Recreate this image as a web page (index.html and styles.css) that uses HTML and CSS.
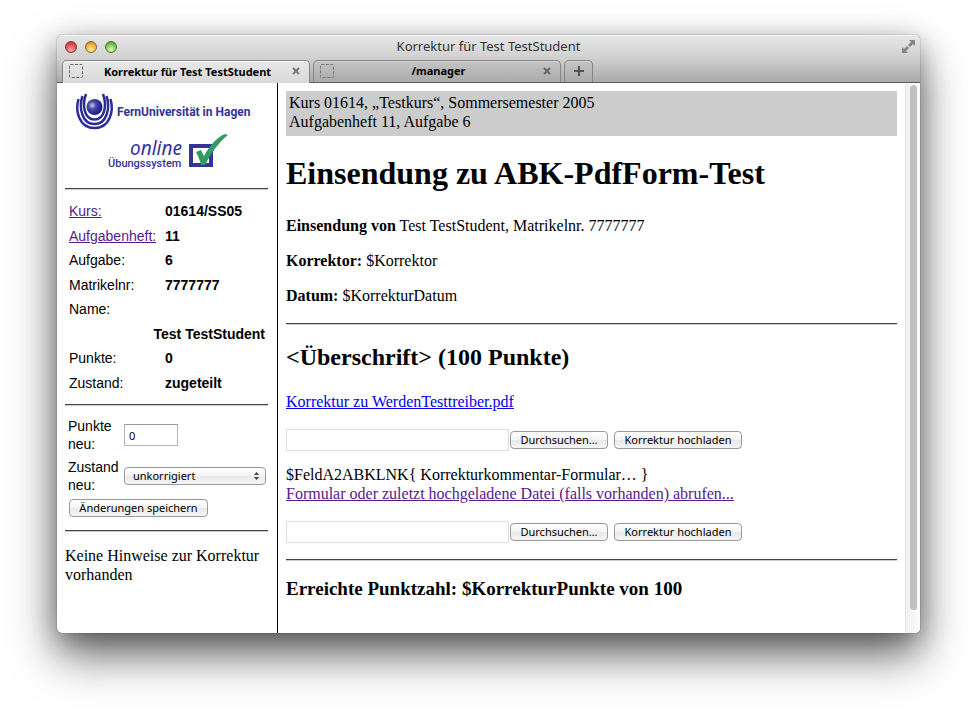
FILE: index.html
```html
<!DOCTYPE html>
<html lang="de">
<head>
<meta charset="utf-8">
<title>Korrektur für Test TestStudent</title>
<link rel="stylesheet" href="styles.css">
</head>
<body>
<div class="window">
  <header class="chrome">
    <div class="titlebar">
      <div class="lights">
        <button class="light red" aria-label="Schließen"></button>
        <button class="light yellow" aria-label="Minimieren"></button>
        <button class="light green" aria-label="Zoomen"></button>
      </div>
      <div class="title">Korrektur für Test TestStudent</div>
      <button class="fullscreen" aria-label="Vollbild">
        <svg width="15" height="15" viewBox="0 0 15 15"><path d="M8 1h6v6l-2-2-3 3-2-2 3-3zM1 8l2 2 3-3 2 2-3 3 2 2H1z" fill="#858585"/></svg>
      </button>
    </div>
    <nav class="tabs">
      <div class="tab active">
        <svg class="favicon" width="14" height="14" viewBox="0 0 14 14"><rect x=".5" y=".5" width="13" height="13" rx="1" fill="none" stroke="#666" stroke-dasharray="3 1.5"/></svg>
        <button class="tab-label">Korrektur für Test TestStudent</button>
        <button class="close" aria-label="Tab schließen"><svg width="8" height="8" viewBox="0 0 8 8"><path d="M1 1l6 6M7 1L1 7" stroke="#777" stroke-width="2"/></svg></button>
      </div>
      <div class="tab">
        <svg class="favicon" width="14" height="14" viewBox="0 0 14 14"><rect x=".5" y=".5" width="13" height="13" rx="1" fill="none" stroke="#777" stroke-dasharray="3 1.5"/></svg>
        <button class="tab-label">/manager</button>
        <button class="close" aria-label="Tab schließen"><svg width="8" height="8" viewBox="0 0 8 8"><path d="M1 1l6 6M7 1L1 7" stroke="#666" stroke-width="2"/></svg></button>
      </div>
      <button class="tab new" aria-label="Neuer Tab"><svg width="10" height="10" viewBox="0 0 10 10"><path d="M5 0v10M0 5h10" stroke="#555" stroke-width="2"/></svg></button>
    </nav>
  </header>
  <div class="page">
    <aside class="sidebar">
      <svg class="logo" width="203" height="88" viewBox="0 0 203 88" role="img" aria-label="FernUniversität in Hagen, online Übungssystem">
        <defs><radialGradient id="ball" cx=".36" cy=".4" r=".6"><stop offset="0" stop-color="#c9cbe8"/><stop offset=".4" stop-color="#4a4ba5"/><stop offset="1" stop-color="#1c1d85"/></radialGradient></defs>
        <g fill="none" stroke="#2c2d94" stroke-width="2.500">
          <path d="M13.500 8C10 20 14 37 29.500 37S49 20 45.500 8"/>
          <path d="M17.500 5C13.500 17 17 33 29.500 33S45.500 17 41.500 5"/>
          <path d="M21 3C17 14 19 28.500 29.500 28.500S42 14 38 3"/>
        </g>
        <circle cx="29.500" cy="16" r="8" fill="url(#ball)"/>
        <text class="uni" x="52" y="25">FernUniversität in Hagen</text>
        <text class="online" x="65" y="64">online</text>
        <text class="system" x="43" y="76">Übungssystem</text>
        <rect x="126" y="55" width="20" height="19" fill="#fff" stroke="#333399" stroke-width="4"/>
        <path d="M131 61l5-2 3 6c6-11 13-19 21-22l3 1c-9 7-16 17-23 30h-4c-1-5-3-9-5-13z" fill="#339966"/>
      </svg>
      <hr>
      <table class="info">
        <tr><th><a href="#">Kurs:</a></th><td>01614/SS05</td></tr>
        <tr><th><a href="#">Aufgabenheft:</a></th><td>11</td></tr>
        <tr><th>Aufgabe:</th><td>6</td></tr>
        <tr><th>Matrikelnr:</th><td>7777777</td></tr>
        <tr><th>Name:</th><td></td></tr>
        <tr><td colspan="2" class="name">Test TestStudent</td></tr>
        <tr><th>Punkte:</th><td>0</td></tr>
        <tr><th>Zustand:</th><td>zugeteilt</td></tr>
      </table>
      <hr>
      <form class="grading">
        <label for="punkte">Punkte neu:</label>
        <input id="punkte" class="points" type="text" value="0">
        <label for="zustand">Zustand neu:</label>
        <div class="select-wrap">
          <select id="zustand"><option>unkorrigiert</option></select>
          <svg class="arrows" width="5" height="8" viewBox="0 0 5 8"><path d="M2.500 0L5 3H0zM2.500 8L0 5h5z" fill="#444"/></svg>
        </div>
        <button type="button" class="btn save">Änderungen speichern</button>
      </form>
      <hr>
      <p class="hint">Keine Hinweise zur Korrektur vorhanden</p>
    </aside>
    <main class="content">
      <div class="course">Kurs 01614, „Testkurs“, Sommersemester 2005<br>Aufgabenheft 11, Aufgabe 6</div>
      <h1>Einsendung zu ABK-PdfForm-Test</h1>
      <p><b>Einsendung von</b> Test TestStudent, Matrikelnr. 7777777</p>
      <p><b>Korrektor:</b> $Korrektor</p>
      <p><b>Datum:</b> $KorrekturDatum</p>
      <hr>
      <h2>&lt;Überschrift&gt; (100 Punkte)</h2>
      <p><a class="fresh" href="#">Korrektur zu WerdenTesttreiber.pdf</a></p>
      <form class="upload">
        <input type="text" aria-label="Datei">
        <button type="button" class="btn">Durchsuchen…</button>
        <button type="button" class="btn send">Korrektur hochladen</button>
      </form>
      <p>$FeldA2ABKLNK{ Korrekturkommentar-Formular… }<br><a href="#">Formular oder zuletzt hochgeladene Datei (falls vorhanden) abrufen...</a></p>
      <form class="upload">
        <input type="text" aria-label="Datei">
        <button type="button" class="btn">Durchsuchen…</button>
        <button type="button" class="btn send">Korrektur hochladen</button>
      </form>
      <hr>
      <h3>Erreichte Punktzahl: $KorrekturPunkte von 100</h3>
    </main>
    <div class="scrollbar"><div class="thumb"></div></div>
  </div>
</div>
</body>
</html>
```
FILE: styles.css
```css
* { box-sizing: border-box; }

body {
  margin: 0;
  min-height: 100vh;
  padding: 35px 57px 79px;
  display: flex;
  background: #fff;
  color: #000;
  font: 16px/19px "Liberation Serif", serif;
}

button { margin: 0; padding: 0; border: 0; background: none; font: inherit; color: inherit; }

.window {
  flex: 1;
  display: flex;
  flex-direction: column;
  overflow: hidden;
  border-radius: 5px;
  background: #fff;
  box-shadow: 0 0 1px rgba(0, 0, 0, .8), 0 22px 46px rgba(0, 0, 0, .6), 0 6px 24px rgba(0, 0, 0, .25);
}

/* Browser chrome */
.chrome {
  background: linear-gradient(#e6e6e6, #cfcfcf 50%, #a9a9a9);
  border-top: 1px solid #f4f4f4;
  border-bottom: 1px solid #5e5e5e;
  font-family: "Noto Sans", sans-serif;
}

.titlebar {
  display: grid;
  grid-template-columns: 80px 1fr 80px;
  align-items: center;
  height: 24px;
  padding-bottom: 3px;
}

.lights { display: flex; gap: 8px; padding-left: 8px; }

.light { width: 12px; height: 12px; border-radius: 50%; border: 1px solid #555; }
.red { background: radial-gradient(circle at 50% 80%, #ffb0a8, #e8474c 60%, #a8262c); border-color: #8c2f33; }
.yellow { background: radial-gradient(circle at 50% 80%, #fff0a0, #f0ad3c 60%, #b77920); border-color: #8f6428; }
.green { background: radial-gradient(circle at 50% 80%, #d8ffb0, #7cc454 60%, #478b2c); border-color: #47733a; }

.title { text-align: center; font-size: 13px; color: #333; }

.fullscreen { justify-self: end; margin-right: 4px; height: 15px; }
.fullscreen svg { display: block; }

.tabs { display: flex; gap: 3px; height: 22px; padding-left: 5px; }

.tab {
  display: flex;
  align-items: center;
  flex: 0 1 248px;
  padding: 0 9px 2px 6px;
  border: 1px solid #858585;
  border-bottom: 0;
  border-radius: 5px 5px 0 0;
  background: linear-gradient(#c4c4c4, #aaa);
  box-shadow: inset 0 1px #d4d4d4;
}

.tab.active {
  margin-bottom: -1px;
  background: linear-gradient(#e8e8e8, #d8d8d8);
  box-shadow: inset 0 1px #fff;
}

.tab.new { flex: 0 0 29px; justify-content: center; padding: 0 0 2px; }
.tab-label { flex: 1; font-size: 11px; font-weight: bold; white-space: nowrap; }
.close, .close svg, .favicon, .new svg { display: block; }

/* Frames */
.page { flex: 1; display: flex; }

.sidebar { flex: 0 0 221px; padding: 8px 9px 8px 8px; border-right: 1px solid #000; }

hr { height: 2px; margin: 0; border: 0; border-top: 1px solid #444; border-bottom: 1px solid #ccc; }
a { color: #551a8b; }
a.fresh { color: #00e; }

.logo { display: block; margin-bottom: 9px; }
.logo text { fill: #333399; }
.uni { font: bold 12px Roboto, sans-serif; }
.online { font: italic 19px "Noto Sans", sans-serif; }
.system { font: 500 11px Roboto, sans-serif; }

.info {
  width: 100%;
  height: 196px;
  margin: 9px 0;
  padding: 0 2px 0 3px;
  border-spacing: 0;
  font: 14px/18px "Liberation Sans", sans-serif;
}
.info th, .info td { padding: 0 1px; text-align: left; }
.info th { width: 96px; font-weight: normal; }
.info td { font-weight: bold; }
.info .name { text-align: right; }

.grading {
  display: grid;
  grid-template-columns: 52px 1fr;
  align-items: center;
  gap: 5px 4px;
  padding: 11px 2px 13px 3px;
  font: 14px/18px "Liberation Sans", sans-serif;
}

input, select { margin: 0; border-radius: 0; background: #fff; font: 11px "Noto Sans", sans-serif; color: #000; }

.points { width: 54px; height: 22px; padding: 0 4px; border: 1px solid #b5b5b5; border-top-color: #999; }

.btn, select {
  height: 18px;
  border: 1px solid #9a9a9a;
  border-radius: 4px;
  background: linear-gradient(#fff, #f4f4f4 50%, #e9e9e9 50%, #f5f5f5);
  font: 11px/16px "Noto Sans", sans-serif;
  white-space: nowrap;
}

.select-wrap { position: relative; display: flex; }
select { appearance: none; width: 100%; padding: 0 8px; }
.arrows { position: absolute; right: 7px; top: 5px; pointer-events: none; }
.btn { padding: 0 8px; }
.save { grid-column: 1 / -1; justify-self: start; width: 139px; margin-left: 1px; padding: 0; }
.hint { margin: 14px 0 0; }

.content { flex: 1; padding: 8px; }
.course { padding: 2px 3px 5px; background: #ccc; }
.content h1 { margin: 19px 0 24px; font-size: 32px; line-height: 37px; }
.content h2 { margin: 18px 0 21px; font-size: 24px; line-height: 28px; }
.content h3 { margin: 17px 0; font-size: 19px; line-height: 22px; }
.content p { margin: 0 0 16px; }
.content p + hr { margin-top: 18px; }

.upload { display: flex; align-items: center; margin: 18px 0 14px; }
.upload input { width: 223px; height: 22px; margin-right: 1px; border: 1px solid #ddd; }
.upload .btn { width: 98px; padding: 0; }
.upload .send { width: 128px; margin-left: 6px; }
.upload + hr { margin-top: 16px; }

.scrollbar { flex: 0 0 15px; padding: 2px 3px 23px 4px; border-left: 1px solid #e3e3e3; background: linear-gradient(90deg, #f1f1f1, #fcfcfc); display: flex; }
.thumb { flex: 1; border-radius: 4px; background: #c1c1c1; }
```
